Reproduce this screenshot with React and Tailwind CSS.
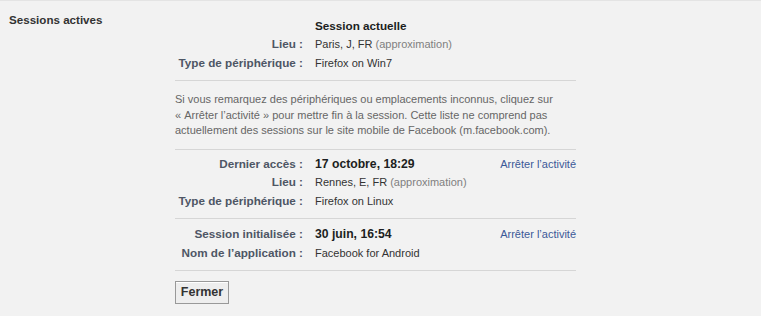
export default function App() {
  const Row = ({ label, children, action, bold }) => (
    <div className="flex h-[18.5px] items-center">
      <div className="w-[131px] pr-[3px] text-right font-bold text-[11.7px] text-[#4e5665]">{label}</div>
      <div className={`flex-1 pl-[9px] ${bold ? "font-bold text-[12.2px] text-[#1c1e21]" : "text-[#333]"}`}>{children}</div>
      {action && <a href="#" className="text-[#3b5998]">Arrêter l’activité</a>}
    </div>
  );

  return (
    <div className="w-[761px] h-[316px] bg-[#f2f2f2] border-t border-[#e4e4e4] flex text-[11px] text-[#333] font-['Tahoma','Liberation_Sans',sans-serif]">
      <div className="w-[175px] pl-[9px] pt-[10px] font-bold text-[11.6px] text-[#333]">Sessions actives</div>

      <div className="w-[401px] pt-[15px]">
        {/* Current session */}
        <div className="flex h-[19px] items-center">
          <div className="w-[140px]" />
          <div className="font-bold text-[11.7px] text-[#1c1e21]">Session actuelle</div>
        </div>
        <Row label="Lieu :">
          Paris, J, FR <span className="text-[#808080]">(approximation)</span>
        </Row>
        <Row label="Type de périphérique :">Firefox on Win7</Row>

        <div className="mt-[8px] border-t border-[#d6d6d6]" />

        <p className="pt-[11px] pb-[10px] leading-[15.5px] text-[#666]">
          Si vous remarquez des périphériques ou emplacements inconnus, cliquez sur «&nbsp;Arrêter l’activité&nbsp;» pour mettre fin à la session. Cette liste ne comprend pas actuellement des sessions sur le site mobile de Facebook (m.facebook.com).
        </p>

        <div className="border-t border-[#d6d6d6]" />

        <div className="pt-[5px]">
          <Row label="Dernier accès :" bold action>17 octobre, 18:29</Row>
          <Row label="Lieu :">
            Rennes, E, FR <span className="text-[#808080]">(approximation)</span>
          </Row>
          <Row label="Type de périphérique :">Firefox on Linux</Row>
        </div>

        <div className="mt-[8px] border-t border-[#d6d6d6]" />

        <div className="pt-[6px]">
          <Row label="Session initialisée :" bold action>30 juin, 16:54</Row>
          <Row label="Nom de l’application :">Facebook for Android</Row>
        </div>

        <div className="mt-[8px] border-t border-[#d6d6d6]" />

        <button className="mt-[10px] h-[23px] w-[54px] border border-[#999] bg-[#eeeeee] font-bold text-[12.5px] text-[#333] shadow-[inset_0_1px_0_#fff]">
          Fermer
        </button>
      </div>
    </div>
  );
}
